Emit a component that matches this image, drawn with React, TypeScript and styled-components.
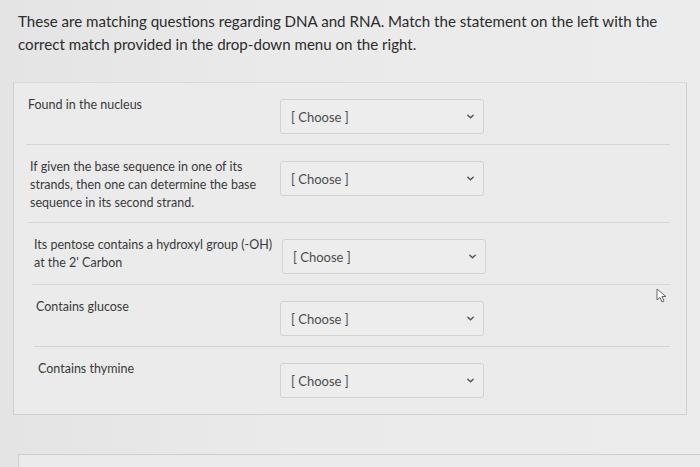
import React from 'react';
import styled, { createGlobalStyle } from 'styled-components';

const GlobalStyle = createGlobalStyle`
  body {
    margin: 0;
    background: #e7e7e7;
    font-family: Lato, "Open Sans", sans-serif;
    color: #2f2f2f;
  }
`;

const Page = styled.div`
  position: relative;
  width: 700px;
  height: 467px;
  overflow: hidden;
  background: linear-gradient(90deg, #e4e4e4 0%, #eaeaea 40%, #ececec 100%);
`;

const Intro = styled.p`
  margin: 0;
  padding: 10px 20px 0 18px;
  font-size: 15.1px;
  line-height: 23px;
  color: #2c2c2c;
  height: 72px;
  box-sizing: border-box;
`;

const QuestionBox = styled.div`
  margin: 10px 13px 0 13px;
  border: 1px solid #cfcfcf;
  border-top-color: #dadada;
  background: #ebebeb;
  height: 333px;
  box-sizing: border-box;
`;

const Row = styled.div<{ last?: boolean; indent: number }>`
  display: flex;
  align-items: flex-start;
  margin: 0 16px 0 ${p => 12 + p.indent}px;
  padding: 13px 0 10px 2px;
  border-bottom: ${p => (p.last ? 'none' : '1px solid #d6d6d6')};
`;

const Statement = styled.div`
  width: 252px;
  flex-shrink: 0;
  font-size: 12.5px;
  line-height: 18px;
  color: #3a3a3a;
  white-space: pre-line;
`;

const Select = styled.div<{ shift: number }>`
  margin-top: 3px;
  margin-left: ${p => p.shift}px;
  width: 204px;
  height: 35px;
  box-sizing: border-box;
  display: flex;
  align-items: center;
  justify-content: space-between;
  padding: 0 8px 0 10px;
  border: 1px solid #d2d2d2;
  border-radius: 3px;
  background: #ededed;
  font-size: 13px;
  color: #4c4c4c;
`;

const Chevron = styled.svg`
  width: 9px;
  height: 9px;
`;

const NextBox = styled.div`
  margin: 39px 0 0 18px;
  height: 40px;
  border: 1px solid #cdcdcd;
  border-right: none;
  background: #ebebeb;
`;

const Cursor = styled.svg`
  position: absolute;
  left: 656px;
  top: 288px;
  width: 14px;
  height: 16px;
`;

const rows = [
  { text: 'Found in the nucleus', indent: 0, shift: 0 },
  {
    text: 'If given the base sequence in one of its strands, then one can determine the base sequence in its second strand.',
    indent: 2,
    shift: -2,
  },
  { text: "Its pentose contains a hydroxyl group (-OH)\nat the 2' Carbon", indent: 6, shift: -4 },
  { text: 'Contains glucose', indent: 8, shift: -8 },
  { text: 'Contains thymine', indent: 10, shift: -10 },
];

const App: React.FC = () => {
  return (
    <Page>
      <GlobalStyle />
      <Intro>
        These are matching questions regarding DNA and RNA. Match the statement on the left with the correct match
        provided in the drop-down menu on the right.
      </Intro>
      <QuestionBox>
        {rows.map((r, i) => (
          <Row key={i} indent={r.indent} last={i === rows.length - 1}>
            <Statement>{r.text}</Statement>
            <Select shift={r.shift}>
              <span>[ Choose ]</span>
              <Chevron viewBox="0 0 10 10">
                <path d="M2 3.5 L5 6.5 L8 3.5" fill="none" stroke="#555" strokeWidth="1.6" strokeLinecap="round" />
              </Chevron>
            </Select>
          </Row>
        ))}
      </QuestionBox>
      <NextBox />
      <Cursor viewBox="0 0 14 16">
        <path d="M1 1 L1 12 L4 9.5 L6 14 L8 13 L6 8.5 L10 8.5 Z" fill="#fff" stroke="#666" strokeWidth="1" />
      </Cursor>
    </Page>
  );
};

export default App;
